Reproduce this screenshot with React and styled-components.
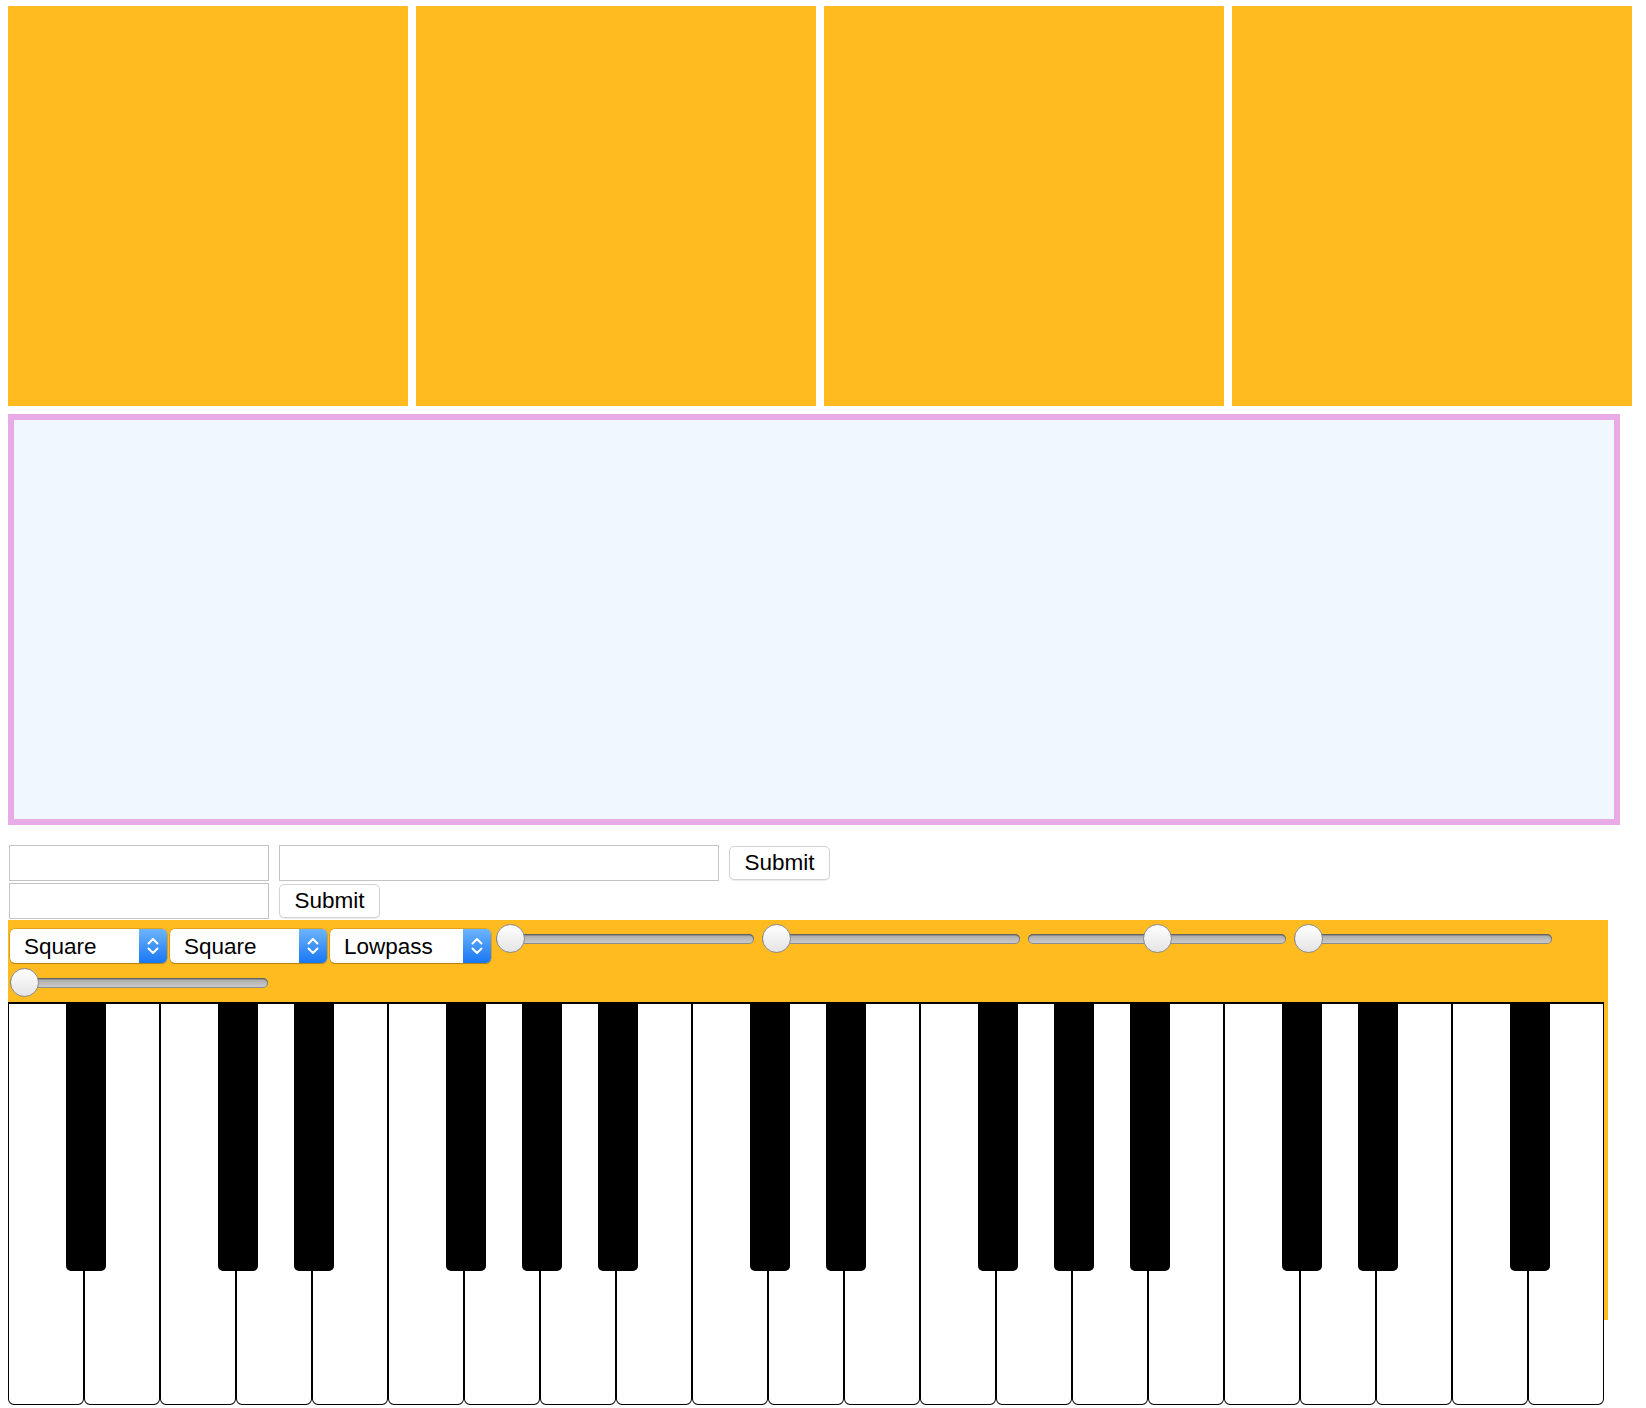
import React from "react";
import styled, { createGlobalStyle } from "styled-components";

const ORANGE = "#ffbb1f";

const NOTES = "ABCDEFG";
const KEYS = Array.from({ length: 21 }, (_, i) => ({
  note: NOTES[i % 7],
  // no sharp after B and E, and none after the last key
  sharp: "ACDFG".includes(NOTES[i % 7]) && i < 20,
}));

const SLIDERS = [0, 0, 50, 0, 0];

export default function App() {
  return (
    <>
      <GlobalStyle />
      <Page>
        <PadRow>
          <Pad />
          <Pad />
          <Pad />
          <Pad />
        </PadRow>

        <Screen />

        <FormRow first>
          <TextInput type="text" />
          <TextInput type="text" wide />
          <SubmitButton>Submit</SubmitButton>
        </FormRow>
        <FormRow>
          <TextInput type="text" />
          <SubmitButton>Submit</SubmitButton>
        </FormRow>

        <Synth>
          <ControlBar>
            <Select width={157} value="Square" />
            <Select width={157} value="Square" />
            <Select width={161} value="Lowpass" last />
            {SLIDERS.map((v, i) => (
              <Slider key={i} type="range" min="0" max="100" defaultValue={v} />
            ))}
          </ControlBar>

          <Keyboard>
            {KEYS.map((k, i) => (
              <WhiteKey key={i}>{k.sharp && <BlackKey />}</WhiteKey>
            ))}
          </Keyboard>
        </Synth>
      </Page>
    </>
  );
}

function Select({ width, value, last }) {
  return (
    <SelectWrap width={width} last={last}>
      <NativeSelect defaultValue={value}>
        <option>{value}</option>
      </NativeSelect>
      <ArrowBox>
        <svg width="14" height="22" viewBox="0 0 14 22">
          <path d="M2.5 8.5 L7 4 L11.5 8.5" fill="none" stroke="#fff" strokeWidth="2" strokeLinecap="round" strokeLinejoin="round" />
          <path d="M2.5 13.5 L7 18 L11.5 13.5" fill="none" stroke="#fff" strokeWidth="2" strokeLinecap="round" strokeLinejoin="round" />
        </svg>
      </ArrowBox>
    </SelectWrap>
  );
}

const GlobalStyle = createGlobalStyle`
  body {
    margin: 0;
    background: #fff;
    font-family: "Liberation Sans", Arial, sans-serif;
  }
`;

const Page = styled.div`
  display: flex;
  flex-direction: column;
  align-items: flex-start;
  padding: 6px 0 0 8px;
`;

const PadRow = styled.div`
  display: flex;
  gap: 8px;
`;

const Pad = styled.div`
  width: 400px;
  height: 400px;
  background: ${ORANGE};
`;

const Screen = styled.div`
  margin-top: 8px;
  width: 1600px;
  height: 399px;
  border: 6px solid #e9abe7;
  background: #f0f7ff;
`;

const FormRow = styled.div`
  display: flex;
  align-items: flex-start;
  gap: 10px;
  margin: ${(p) => (p.first ? "20px" : "2px")} 0 0 1px;
`;

const TextInput = styled.input`
  box-sizing: border-box;
  width: ${(p) => (p.wide ? "440px" : "260px")};
  height: 36px;
  margin: 0;
  padding: 0 6px;
  border: 1px solid #c4c4c4;
  background: #fff;
  outline: none;
  font-size: 18px;
`;

const SubmitButton = styled.button`
  box-sizing: border-box;
  width: 101px;
  height: 34px;
  margin: 1px 0 0;
  padding: 0;
  border: 1px solid #d3d3d3;
  border-radius: 5px;
  background: #fff;
  box-shadow: 0 1px 1px rgba(0, 0, 0, 0.08);
  font-family: "Liberation Sans", Arial, sans-serif;
  font-size: 22.5px;
  color: #000;
`;

/* the orange panel is 400px tall; the keyboard hangs past its bottom */
const Synth = styled.div`
  margin-top: 1px;
  width: 1600px;
  display: flex;
  flex-direction: column;
  background: linear-gradient(${ORANGE}, ${ORANGE}) top left / 100% 400px no-repeat;
`;

const ControlBar = styled.div`
  display: flex;
  flex-wrap: wrap;
  align-items: flex-start;
  row-gap: 5px;
  padding: 4px 0 0 2px;
`;

const SelectWrap = styled.div`
  box-sizing: border-box;
  width: ${(p) => p.width}px;
  height: 34px;
  margin: 5px ${(p) => (p.last ? 5 : 3)}px 0 0;
  display: flex;
  border-radius: 5px;
  background: #fff;
  overflow: hidden;
  box-shadow: 0 0 0 0.5px rgba(0, 0, 0, 0.25), 0 1px 1px rgba(0, 0, 0, 0.2);
`;

const NativeSelect = styled.select`
  appearance: none;
  -webkit-appearance: none;
  flex: 1;
  min-width: 0;
  margin: 0;
  padding: 0 0 0 14px;
  border: none;
  background: transparent;
  outline: none;
  font-family: "Liberation Sans", Arial, sans-serif;
  font-size: 22.5px;
  color: #000;
`;

const ArrowBox = styled.div`
  width: 28px;
  display: flex;
  align-items: center;
  justify-content: center;
  background: linear-gradient(#6db4fb, #1877f4);
`;

const Slider = styled.input`
  -webkit-appearance: none;
  appearance: none;
  width: 258px;
  height: 29px;
  margin: 0 8px 0 0;
  padding: 0;
  background: transparent;

  &::-webkit-slider-runnable-track {
    height: 10px;
    border-radius: 5px;
    background: linear-gradient(#a9a9a9, #cdcdcd);
    box-shadow: inset 0 0 0 1px rgba(90, 90, 90, 0.55), inset 0 1.5px 1px rgba(0, 0, 0, 0.35);
  }

  &::-webkit-slider-thumb {
    -webkit-appearance: none;
    box-sizing: border-box;
    width: 29px;
    height: 29px;
    margin-top: -10px;
    border-radius: 50%;
    border: 1.5px solid #8a8a8a;
    background: linear-gradient(#ffffff, #e4e4e4);
  }
`;

const Keyboard = styled.div`
  display: flex;
  flex-shrink: 0;
  margin-top: 5px;
`;

const WhiteKey = styled.div`
  position: relative;
  flex-shrink: 0;
  box-sizing: border-box;
  width: 76px;
  height: 403px;
  border: 1px solid #000;
  border-top-width: 2px;
  border-radius: 0 0 6px 6px;
  background: #fff;
`;

const BlackKey = styled.div`
  position: absolute;
  top: -2px;
  left: 57px;
  z-index: 2;
  width: 40px;
  height: 269px;
  border-radius: 0 0 5px 5px;
  background: #000;
`;
